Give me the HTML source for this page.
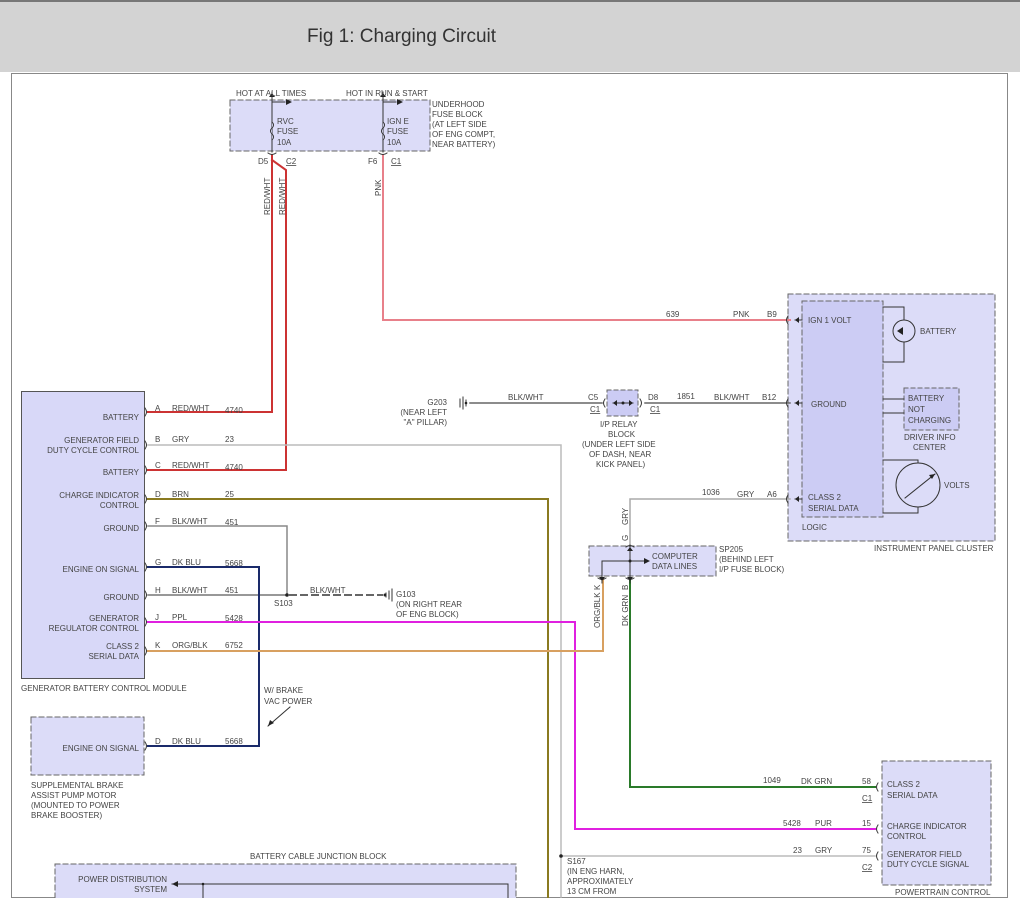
<!DOCTYPE html>
<html><head><meta charset="utf-8"><style>
html,body{margin:0;padding:0;background:#fff;width:1020px;height:916px;overflow:hidden}
.hdr{position:absolute;left:0;top:0;width:1020px;height:72px;background:#d3d3d3;border-top:2px solid #777;box-sizing:border-box}
.hdr span{position:absolute;left:307px;top:24px;font-family:"Liberation Sans Narrow","Liberation Sans",sans-serif;font-size:19px;color:#333}
svg{position:absolute;left:0;top:0}
text{font-family:"Liberation Sans",sans-serif;font-size:8px;fill:#444}
</style></head><body>
<div class="hdr"><span>Fig 1: Charging Circuit</span></div>
<svg width="1020" height="916" viewBox="0 0 1020 916">
<rect x="11.5" y="73.5" width="996" height="824" fill="#fff" stroke="#888"/>
<g fill="none" stroke-linecap="square">
<!-- boxes -->
<rect x="230" y="100" width="200" height="51" fill="#dcdcf8" stroke="#666" stroke-dasharray="5,3"/>
<rect x="788" y="294" width="207" height="247" fill="#dcdcf8" stroke="#666" stroke-dasharray="5,3"/>
<rect x="802" y="301" width="81" height="216" fill="#ccccf4" stroke="#666" stroke-dasharray="5,3"/>
<rect x="904" y="388" width="55" height="42" fill="#ccccf4" stroke="#666" stroke-dasharray="4,3"/>
<rect x="21.5" y="391.5" width="123" height="287" fill="#d8d8f8" stroke="#555"/>
<rect x="31" y="717" width="113" height="58" fill="#dcdcf8" stroke="#666" stroke-dasharray="5,3"/>
<rect x="55" y="864" width="461" height="40" fill="#dcdcf8" stroke="#666" stroke-dasharray="5,3"/>
<rect x="607" y="390" width="31" height="26" fill="#ccccf4" stroke="#666" stroke-dasharray="4,3"/>
<rect x="589" y="546" width="127" height="30" fill="#dcdcf8" stroke="#666" stroke-dasharray="5,3"/>
<rect x="882" y="761" width="109" height="124" fill="#dcdcf8" stroke="#666" stroke-dasharray="5,3"/>
<!-- fuses -->
<path d="M272 92V152M272 102H285M383 92V152M383 102H396" stroke="#333"/>
<path d="M272 122q3 3 0 6q-3 3 0 6q3 3 0 6M383 122q3 3 0 6q-3 3 0 6q3 3 0 6" stroke="#333" fill="#dcdcf8"/>
<!-- wires -->
<path d="M272 155V412H148" stroke="#cc3333" stroke-width="2"/>
<path d="M272 160L286 170V470H148" stroke="#cc3333" stroke-width="2"/>
<path d="M383 155V320H790" stroke="#e8808a" stroke-width="2"/>
<path d="M148 445H561V897" stroke="#bbb" stroke-width="1.5"/>
<path d="M148 499H548V897" stroke="#8a7a20" stroke-width="2"/>
<path d="M148 526H287V595" stroke="#888" stroke-width="1.5"/>
<path d="M148 595H287" stroke="#777" stroke-width="1.5"/>
<path d="M290 595H382" stroke="#666" stroke-width="2" stroke-dasharray="6,5"/>
<path d="M148 567H259V746H148" stroke="#1a2a6a" stroke-width="2"/>
<path d="M148 622H575V829H875" stroke="#e020e0" stroke-width="2"/>
<path d="M148 651H603V580" stroke="#d8a060" stroke-width="2"/>
<path d="M630 580V787H875" stroke="#2a7a2a" stroke-width="2"/>
<path d="M561 856H875" stroke="#bbb" stroke-width="1.5"/>
<path d="M630 545V499H790" stroke="#aaa" stroke-width="1.5"/>
<path d="M470 403H602M645 403H790" stroke="#666" stroke-width="1.5"/>
<path d="M613 403H633M602 561H645M602 561V583M630 545V583" stroke="#333"/>
<!-- IPC internals -->
<path d="M883 307H904V362H883M883 399H904M883 413H904M883 460H918V463M918 507V513H883" stroke="#333"/>
<circle cx="904" cy="331" r="11" fill="#dcdcf8" stroke="#333"/>
<circle cx="918" cy="485" r="22" fill="#dcdcf8" stroke="#333"/>
<path d="M905 498L935 474" stroke="#333"/>
<path d="M795 320H802M795 403H802M795 499H802" stroke="#333"/>
<path d="M508 884H172M203 884V904M508 884V904" stroke="#333"/>
<path d="M290 707L268 726" stroke="#333"/>
<!-- ground symbols -->
<path d="M460 399V407M463 397V409M466 400V406" stroke="#333"/>
<path d="M389 591V599M392 589V601M386 593V597" stroke="#333"/>
<!-- connector arcs -->
<path d="M145 408q3 4 0 8M145 441q3 4 0 8M145 466q3 4 0 8M145 495q3 4 0 8M145 522q3 4 0 8M145 563q3 4 0 8M145 591q3 4 0 8M145 618q3 4 0 8M145 647q3 4 0 8M145 742q3 4 0 8" stroke="#333"/>
<path d="M788 316q-3 4 0 8M788 399q-3 4 0 8M788 495q-3 4 0 8M878 783q-3 4 0 8M878 825q-3 4 0 8M878 852q-3 4 0 8M605 399q-3 4 0 8M640 399q3 4 0 8" stroke="#333"/>
<path d="M268 153q4 3 8 0M379 153q4 3 8 0M626 547q4 -3 8 0M598 578q4 3 8 0M626 578q4 3 8 0" stroke="#333"/>
</g>
<g fill="#222">
<circle cx="287" cy="595" r="1.8"/><circle cx="561" cy="856" r="1.8"/><circle cx="385" cy="595" r="1.5"/><circle cx="623" cy="403" r="1.5"/><circle cx="630" cy="561" r="1.5"/><circle cx="203" cy="884" r="1.3"/><circle cx="466" cy="403" r="1.3"/>
<path d="M292 102l-6-3v6zM403 102l-6-3v6zM650 561l-6-3v6zM172 884l6-3v6zM268 726l2-6 4 3zM272 93l-3 4h6zM383 93l-3 4h6zM630 547l-3 4h6zM602 581l-3-4h6zM630 581l-3-4h6zM935 474l-6 1 3 4zM897 331l6-4v8zM613 403l4-3v6zM633 403l-4-3v6zM795 320l4-3v6zM795 403l4-3v6zM795 499l4-3v6z"/>
</g>
<g>
<text x="236" y="96">HOT AT ALL TIMES</text><text x="346" y="96">HOT IN RUN &amp; START</text>
<text x="432" y="107">UNDERHOOD</text><text x="432" y="117">FUSE BLOCK</text><text x="432" y="127">(AT LEFT SIDE</text><text x="432" y="137">OF ENG COMPT,</text><text x="432" y="147">NEAR BATTERY)</text>
<text x="277" y="124">RVC</text><text x="277" y="134">FUSE</text><text x="277" y="145">10A</text>
<text x="387" y="124">IGN E</text><text x="387" y="134">FUSE</text><text x="387" y="145">10A</text>
<text x="258" y="164">D5</text><text x="286" y="164" text-decoration="underline">C2</text><text x="368" y="164">F6</text><text x="391" y="164" text-decoration="underline">C1</text>
<text transform="translate(270,215) rotate(-90)">RED/WHT</text><text transform="translate(285,215) rotate(-90)">RED/WHT</text><text transform="translate(381,196) rotate(-90)">PNK</text>
<text x="666" y="317">639</text><text x="733" y="317">PNK</text><text x="767" y="317">B9</text>
<text x="808" y="323">IGN 1 VOLT</text><text x="811" y="407">GROUND</text><text x="808" y="500">CLASS 2</text><text x="808" y="511">SERIAL DATA</text><text x="802" y="530">LOGIC</text>
<text x="874" y="551">INSTRUMENT PANEL CLUSTER</text><text x="920" y="334">BATTERY</text>
<text x="908" y="401">BATTERY</text><text x="908" y="412">NOT</text><text x="908" y="423">CHARGING</text><text x="904" y="440">DRIVER INFO</text><text x="913" y="450">CENTER</text><text x="944" y="488">VOLTS</text>
<g text-anchor="end"><text x="139" y="420">BATTERY</text><text x="139" y="443">GENERATOR FIELD</text><text x="139" y="453">DUTY CYCLE CONTROL</text><text x="139" y="475">BATTERY</text><text x="139" y="498">CHARGE INDICATOR</text><text x="139" y="508">CONTROL</text><text x="139" y="531">GROUND</text><text x="139" y="572">ENGINE ON SIGNAL</text><text x="139" y="600">GROUND</text><text x="139" y="621">GENERATOR</text><text x="139" y="631">REGULATOR CONTROL</text><text x="139" y="649">CLASS 2</text><text x="139" y="659">SERIAL DATA</text><text x="139" y="751">ENGINE ON SIGNAL</text><text x="167" y="882">POWER DISTRIBUTION</text><text x="167" y="892">SYSTEM</text><text x="447" y="405">G203</text><text x="447" y="415">(NEAR LEFT</text><text x="447" y="425">"A" PILLAR)</text></g>
<text x="21" y="691">GENERATOR BATTERY CONTROL MODULE</text>
<text x="155" y="411">A</text><text x="172" y="411">RED/WHT</text><text x="225" y="413">4740</text>
<text x="155" y="442">B</text><text x="172" y="442">GRY</text><text x="225" y="442">23</text>
<text x="155" y="468">C</text><text x="172" y="468">RED/WHT</text><text x="225" y="470">4740</text>
<text x="155" y="497">D</text><text x="172" y="497">BRN</text><text x="225" y="497">25</text>
<text x="155" y="524">F</text><text x="172" y="524">BLK/WHT</text><text x="225" y="525">451</text>
<text x="155" y="565">G</text><text x="172" y="565">DK BLU</text><text x="225" y="566">5668</text>
<text x="155" y="593">H</text><text x="172" y="593">BLK/WHT</text><text x="225" y="593">451</text>
<text x="155" y="620">J</text><text x="172" y="620">PPL</text><text x="225" y="621">5428</text>
<text x="155" y="648">K</text><text x="172" y="648">ORG/BLK</text><text x="225" y="648">6752</text>
<text x="155" y="744">D</text><text x="172" y="744">DK BLU</text><text x="225" y="744">5668</text>
<text x="310" y="593">BLK/WHT</text><text x="274" y="606">S103</text><text x="396" y="597">G103</text><text x="396" y="607">(ON RIGHT REAR</text><text x="396" y="617">OF ENG BLOCK)</text>
<text x="264" y="693">W/ BRAKE</text><text x="264" y="704">VAC POWER</text>
<text x="31" y="788">SUPPLEMENTAL BRAKE</text><text x="31" y="798">ASSIST PUMP MOTOR</text><text x="31" y="808">(MOUNTED TO POWER</text><text x="31" y="818">BRAKE BOOSTER)</text>
<text x="250" y="859">BATTERY CABLE JUNCTION BLOCK</text>
<text x="508" y="400">BLK/WHT</text><text x="588" y="400">C5</text><text x="590" y="412" text-decoration="underline">C1</text><text x="648" y="400">D8</text><text x="650" y="412" text-decoration="underline">C1</text>
<text x="677" y="399">1851</text><text x="714" y="400">BLK/WHT</text><text x="762" y="400">B12</text>
<text x="600" y="427">I/P RELAY</text><text x="608" y="437">BLOCK</text><text x="582" y="447">(UNDER LEFT SIDE</text><text x="589" y="457">OF DASH, NEAR</text><text x="596" y="467">KICK PANEL)</text>
<text x="702" y="495">1036</text><text x="737" y="497">GRY</text><text x="767" y="497">A6</text>
<text transform="translate(628,525) rotate(-90)">GRY</text><text transform="translate(628,541) rotate(-90)">G</text>
<text x="652" y="559">COMPUTER</text><text x="652" y="569">DATA LINES</text><text x="719" y="552">SP205</text><text x="719" y="562">(BEHIND LEFT</text><text x="719" y="572">I/P FUSE BLOCK)</text>
<text transform="translate(600,590) rotate(-90)">K</text><text transform="translate(600,628) rotate(-90)">ORG/BLK</text>
<text transform="translate(628,590) rotate(-90)">B</text><text transform="translate(628,626) rotate(-90)">DK GRN</text>
<text x="763" y="783">1049</text><text x="801" y="784">DK GRN</text><text x="862" y="784">58</text><text x="862" y="801" text-decoration="underline">C1</text>
<text x="783" y="826">5428</text><text x="815" y="826">PUR</text><text x="862" y="826">15</text>
<text x="793" y="853">23</text><text x="815" y="853">GRY</text><text x="862" y="853">75</text><text x="862" y="870" text-decoration="underline">C2</text>
<text x="887" y="787">CLASS 2</text><text x="887" y="798">SERIAL DATA</text><text x="887" y="829">CHARGE INDICATOR</text><text x="887" y="839">CONTROL</text><text x="887" y="857">GENERATOR FIELD</text><text x="887" y="867">DUTY CYCLE SIGNAL</text><text x="895" y="895">POWERTRAIN CONTROL</text>
<text x="567" y="864">S167</text><text x="567" y="874">(IN ENG HARN,</text><text x="567" y="884">APPROXIMATELY</text><text x="567" y="894">13 CM FROM</text>
</g>
<rect x="0" y="898" width="1020" height="18" fill="#fff"/>
</svg>
</body></html>
